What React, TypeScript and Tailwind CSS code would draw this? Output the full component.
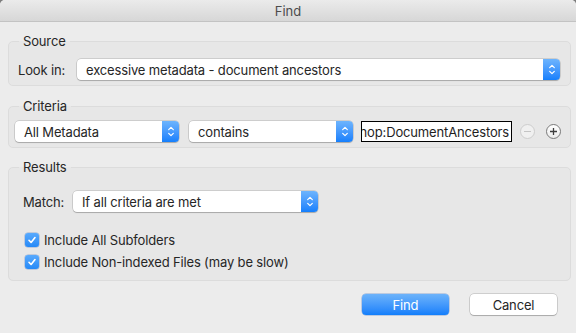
import React from "react";

const font = { fontFamily: "Inter, 'Noto Sans', sans-serif" };

function Stepper() {
  return (
    <div className="flex h-full w-[17px] items-center justify-center rounded-r-[4px] bg-gradient-to-b from-[#6db4fd] to-[#137ffc]">
      <svg width="8" height="13" viewBox="0 0 8 13" fill="none">
        <path d="M1.7 4.6 L4 2.3 L6.3 4.6" stroke="white" strokeWidth="1.2" strokeLinecap="round" strokeLinejoin="round" />
        <path d="M1.7 8.4 L4 10.7 L6.3 8.4" stroke="white" strokeWidth="1.2" strokeLinecap="round" strokeLinejoin="round" />
      </svg>
    </div>
  );
}

function Popup({ label, className }: { label: string; className: string }) {
  return (
    <div
      className={`flex h-[21px] items-center rounded-[4px] bg-white shadow-[0_0_0_0.5px_rgba(0,0,0,0.22),0_1px_1px_rgba(0,0,0,0.18)] ${className}`}
    >
      <span className="flex-1 truncate pl-[9px] text-[13px] leading-[16px] tracking-[-0.15px] text-[#262626]">{label}</span>
      <Stepper />
    </div>
  );
}

function Checkbox({ label }: { label: string }) {
  return (
    <div className="flex h-[22px] items-center">
      <div className="flex h-[14px] w-[14px] items-center justify-center rounded-[3px] bg-gradient-to-b from-[#58aafd] to-[#2489f7] shadow-[0_0_0_0.5px_rgba(0,60,160,0.35)]">
        <svg width="10" height="10" viewBox="0 0 10 10" fill="none">
          <path d="M2 5.3 L4.1 7.5 L8 2.6" stroke="white" strokeWidth="1.6" strokeLinecap="round" strokeLinejoin="round" />
        </svg>
      </div>
      <span className="ml-[5px] text-[13px] leading-[16px] tracking-[-0.15px] text-[#262626]">{label}</span>
    </div>
  );
}

function Group({
  title,
  className,
  children,
}: {
  title: string;
  className: string;
  children: React.ReactNode;
}) {
  return (
    <fieldset className={`m-0 min-w-0 rounded-[5px] border border-[#dcdcdc] bg-[#e7e7e7] p-0 ${className}`}>
      <legend className="ml-[10px] px-[4px] text-[13px] leading-[16px] tracking-[-0.15px] text-[#262626]">{title}</legend>
      {children}
    </fieldset>
  );
}

const label = "text-[13px] leading-[16px] tracking-[-0.15px] text-[#262626]";

export default function App() {
  return (
    <div className="h-[333px] w-[576px] bg-[#7d7d7d]" style={font}>
      <div className="flex h-[333px] w-[576px] flex-col overflow-hidden rounded-t-[5px] bg-[#ececec]">
        <div className="flex h-[22px] items-center justify-center border-b border-[#c3c3c3] bg-gradient-to-b from-[#ebebeb] to-[#d7d7d7]">
          <span className="pt-[1px] text-[13px] leading-[16px] text-[#4c4c4c]">Find</span>
        </div>

        <div className="flex flex-col pl-[8px] pr-[5px]">
          <Group title="Source" className="mt-[11px]">
            <div className="mt-[10px] mb-[5px] ml-[9px] mr-[10px] flex items-center">
              <span className={`w-[59px] ${label}`}>Look in:</span>
              <Popup label="excessive metadata - document ancestors" className="flex-1" />
            </div>
          </Group>

          <Group title="Criteria" className="mt-[12px]">
            <div className="mt-[7px] mb-[5px] ml-[6px] mr-[9px] flex items-center">
              <Popup label="All Metadata" className="w-[164px]" />
              <Popup label="contains" className="ml-[10px] w-[164px]" />
              <div className="ml-[8px] flex h-[21px] w-[151px] items-center justify-end overflow-hidden border border-black bg-white pr-[2px]">
                <span className="whitespace-nowrap text-[13px] leading-[16px] tracking-[-0.15px] text-[#1e1e1e]">
                  Photoshop:DocumentAncestors
                </span>
              </div>
              <div className="ml-[8px] flex h-[15px] w-[15px] items-center justify-center rounded-full border border-[#cdcdcd] bg-[#f0f0f0]">
                <div className="h-[1px] w-[7px] bg-[#c4c4c4]" />
              </div>
              <div className="ml-[11px] flex h-[15px] w-[15px] items-center justify-center rounded-full border border-[#7a7a7a] bg-gradient-to-b from-white to-[#ececec]">
                <svg width="9" height="9" viewBox="0 0 9 9">
                  <path d="M4.5 1 V8 M1 4.5 H8" stroke="#3d3d3d" strokeWidth="1.3" />
                </svg>
              </div>
            </div>
          </Group>

          <Group title="Results" className="mt-[11px]">
            <div className="mt-[16px] ml-[14px] flex items-center">
              <span className={`w-[50px] ${label}`}>Match:</span>
              <Popup label="If all criteria are met" className="w-[245px]" />
            </div>
            <div className="mt-[17px] mb-[7px] ml-[16px] flex flex-col">
              <Checkbox label="Include All Subfolders" />
              <Checkbox label="Include Non-indexed Files (may be slow)" />
            </div>
          </Group>

          <div className="mt-[13px] flex justify-end pr-[14px]">
            <div className="flex h-[21px] w-[87px] items-center justify-center rounded-[4px] bg-gradient-to-b from-[#6cb3fa] to-[#0f7efb] shadow-[0_0_0_0.5px_rgba(0,70,180,0.4)]">
              <span className="text-[13px] leading-[16px] tracking-[-0.15px] text-white">Find</span>
            </div>
            <div className="ml-[21px] flex h-[21px] w-[87px] items-center justify-center rounded-[4px] bg-white shadow-[0_0_0_0.5px_rgba(0,0,0,0.25),0_1px_1px_rgba(0,0,0,0.18)]">
              <span className={label}>Cancel</span>
            </div>
          </div>
        </div>
      </div>
    </div>
  );
}
